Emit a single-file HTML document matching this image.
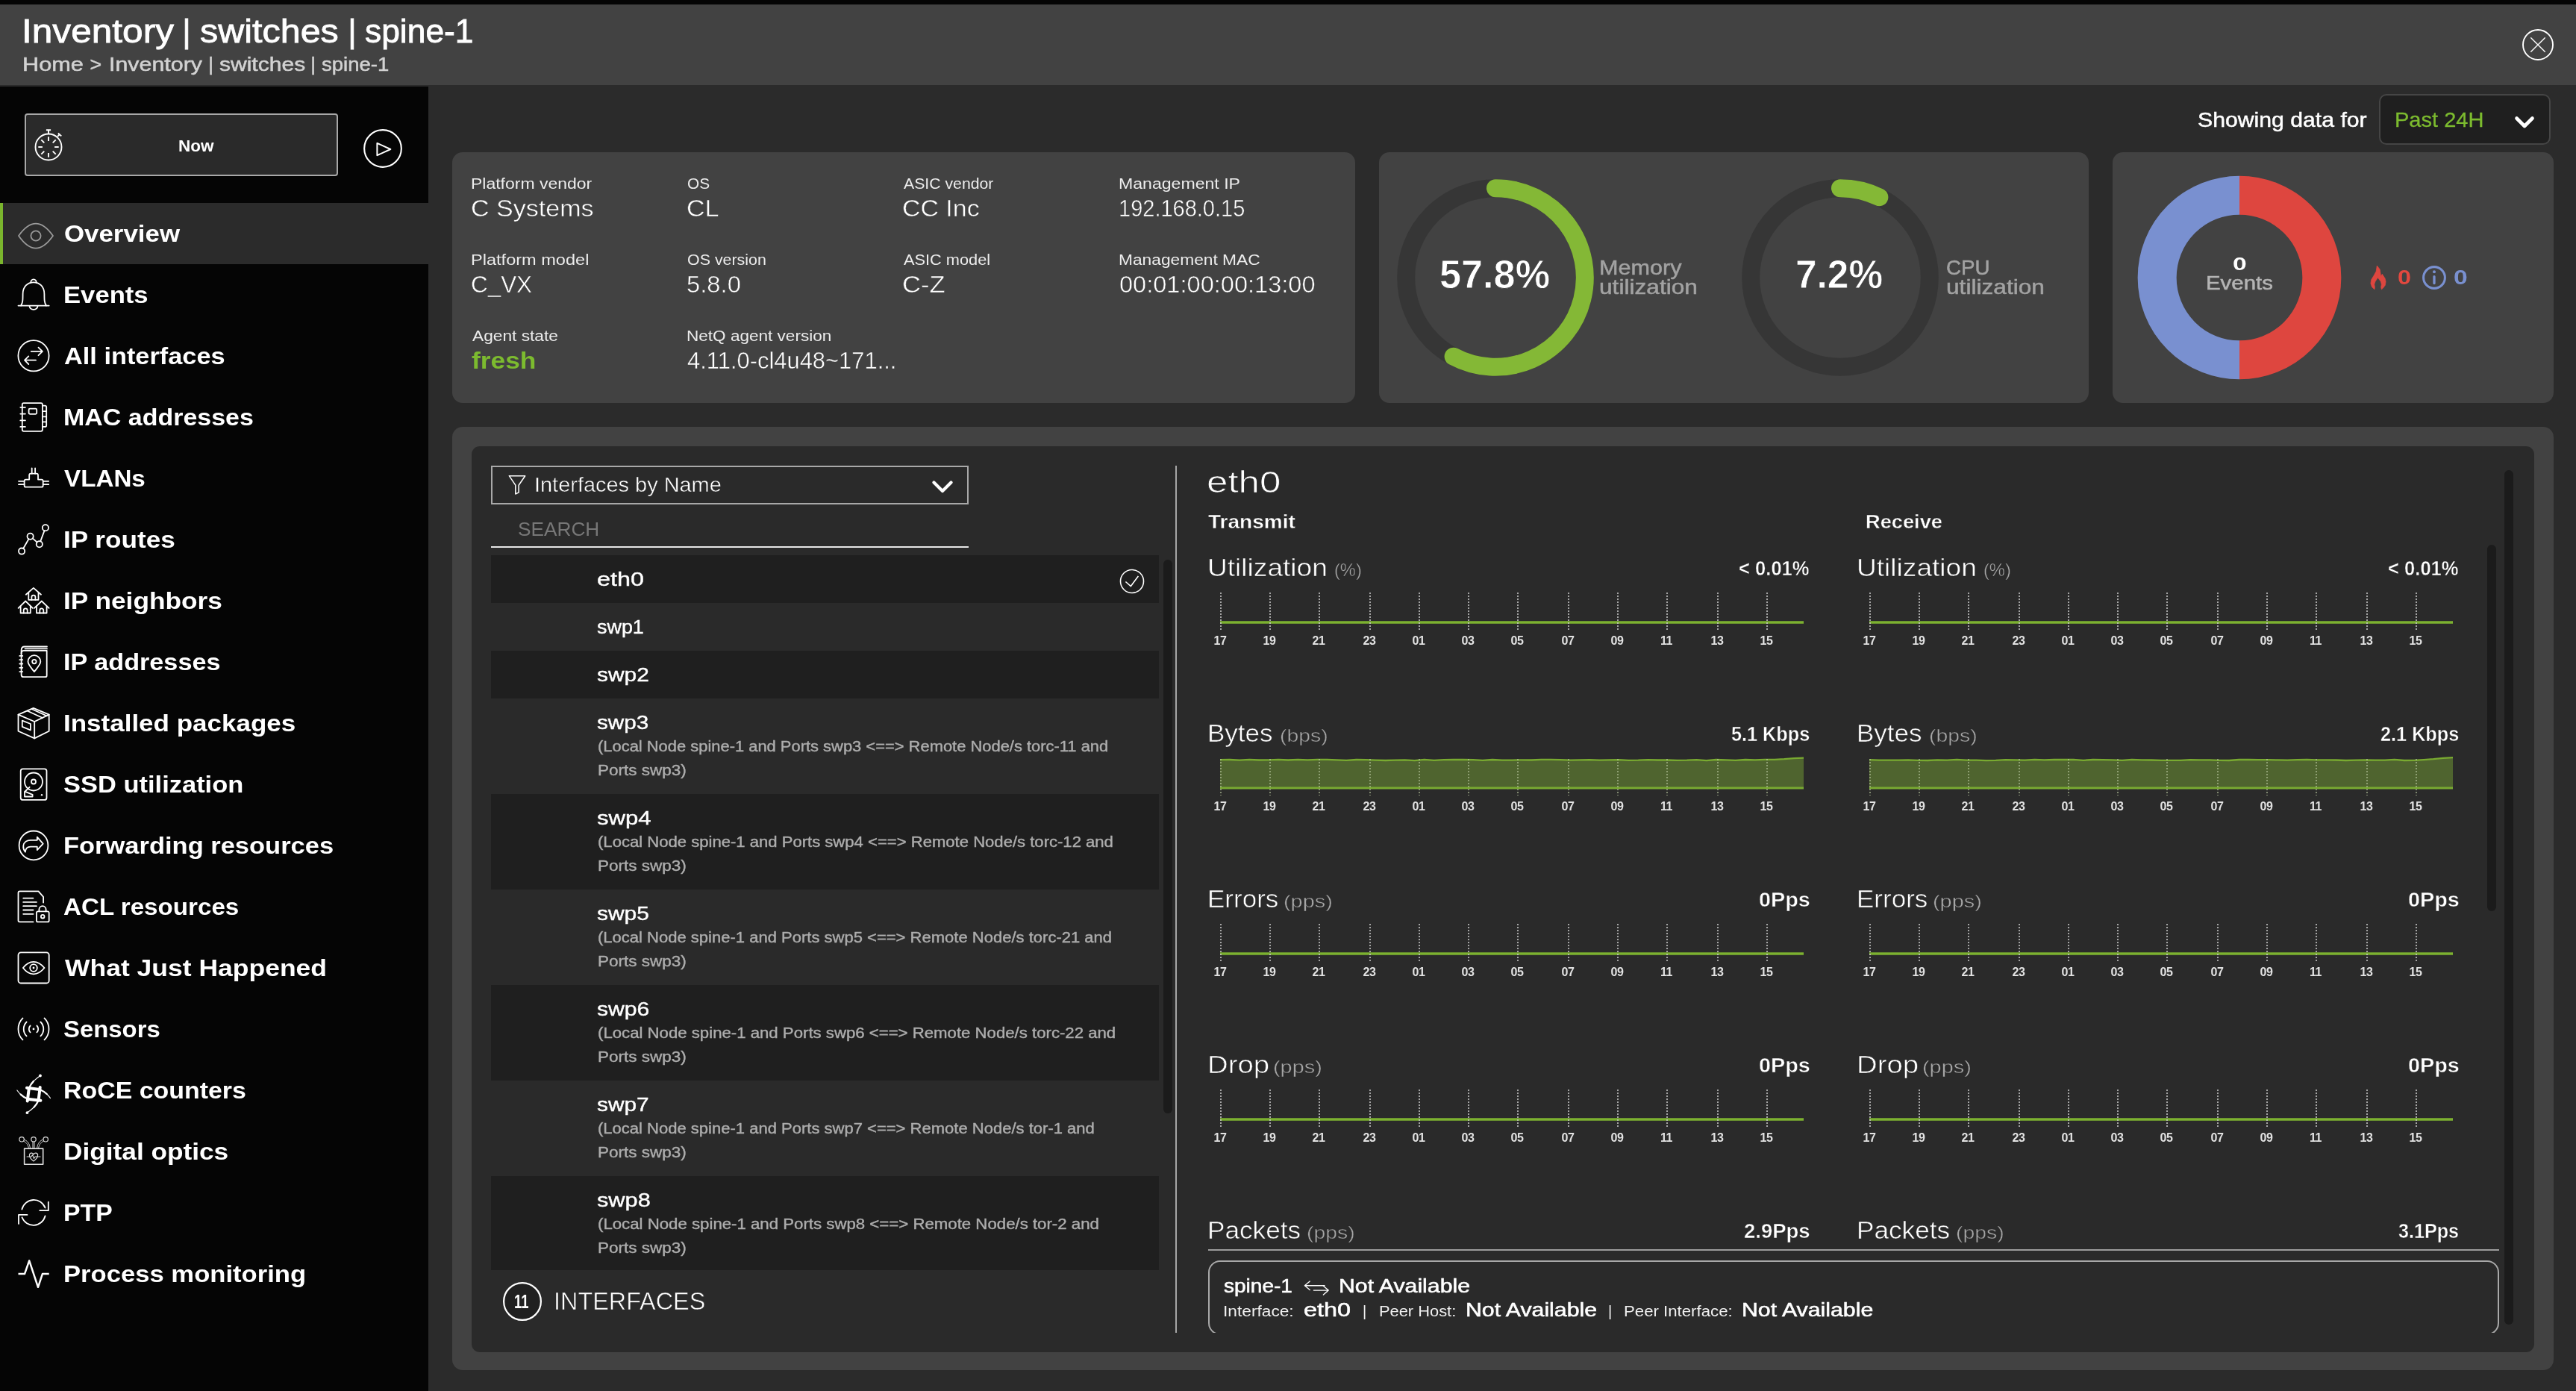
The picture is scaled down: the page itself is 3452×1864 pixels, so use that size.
<!DOCTYPE html>
<html lang="en"><head><meta charset="utf-8"><title>Inventory | switches | spine-1</title>
<style>
html,body{margin:0;padding:0}
body{position:relative;width:3452px;height:1864px;overflow:hidden;background:#2b2b2b;font-family:"Liberation Sans",Arial,sans-serif;color:#fff}
.b{position:absolute;box-sizing:border-box}
.t{position:absolute;white-space:pre;line-height:1;transform-origin:0 0}
.ic,.sv{position:absolute;overflow:visible}
header,nav,main,section,ul,li,h1,h2,h3,p{margin:0;padding:0;list-style:none;font-weight:inherit;font-size:inherit}
</style></head><body>
<header>
<div class="b" style="left:0px;top:0px;width:3452px;height:6px;background:#040404;"></div>
<div class="b" style="left:0px;top:6px;width:3452px;height:108px;background:#424242;"></div>
<h1>
<span class="t" style="left:28.9px;top:20.3px;font-size:44px;transform:scaleX(1.1270);-webkit-text-stroke:0.8px #fff;">Inventory</span>
<span class="t" style="left:232.4px;top:20.3px;font-size:44px;transform:scaleX(1.0030);-webkit-text-stroke:0.8px #fff;"> | </span>
<span class="t" style="left:268.2px;top:20.3px;font-size:44px;transform:scaleX(1.1014);-webkit-text-stroke:0.8px #fff;">switches</span>
<span class="t" style="left:453.7px;top:20.3px;font-size:44px;transform:scaleX(1.0030);-webkit-text-stroke:0.8px #fff;"> | </span>
<span class="t" style="left:489.0px;top:20.3px;font-size:44px;transform:scaleX(1.0084);-webkit-text-stroke:0.8px #fff;">spine-1</span>
</h1>
<p>
<span class="t" style="left:29.5px;top:73.1px;font-size:26px;color:#d2d2d2;transform:scaleX(1.1811);-webkit-text-stroke:0.5px #d2d2d2;">Home</span>
<span class="t" style="left:113.1px;top:73.1px;font-size:26px;color:#d2d2d2;transform:scaleX(1.0309);-webkit-text-stroke:0.5px #d2d2d2;"> &gt; </span>
<span class="t" style="left:145.9px;top:73.1px;font-size:26px;color:#d2d2d2;transform:scaleX(1.1687);-webkit-text-stroke:0.5px #d2d2d2;">Inventory</span>
<span class="t" style="left:272.0px;top:73.1px;font-size:26px;color:#d2d2d2;transform:scaleX(1.0030);-webkit-text-stroke:0.5px #d2d2d2;"> | </span>
<span class="t" style="left:293.6px;top:73.1px;font-size:26px;color:#d2d2d2;transform:scaleX(1.1549);-webkit-text-stroke:0.5px #d2d2d2;">switches</span>
<span class="t" style="left:408.8px;top:73.1px;font-size:26px;color:#d2d2d2;transform:scaleX(1.0030);-webkit-text-stroke:0.5px #d2d2d2;"> | </span>
<span class="t" style="left:430.5px;top:73.1px;font-size:26px;color:#d2d2d2;transform:scaleX(1.0584);-webkit-text-stroke:0.5px #d2d2d2;">spine-1</span>
</p>
<svg class="sv" style="left:3374px;top:33px" width="54" height="54" viewBox="-27 -27 54 54" fill="none" stroke="#fff" stroke-width="1.9" stroke-linecap="round"><circle r="20"/><path d="M-9.3 -9.3L9.3 9.3M9.3 -9.3L-9.3 9.3" stroke-width="1.4"/></svg>
</header>
<nav>
<div class="b" style="left:0px;top:116px;width:574px;height:1748px;background:#050505;"></div>
<div class="b" style="left:33px;top:152px;width:420px;height:84px;background:#2a2a2a;border-radius:4px;border:2px solid #a8a8a8;"></div>
<svg class="sv" style="left:39.3px;top:168.8px" width="52" height="52" viewBox="-26 -28 52 52" fill="none" stroke="#fff" stroke-width="1.9" stroke-linecap="butt"><circle r="17.5"/><path d="M0 -17.5V-23M-3.1 -22.8H3.1M12.1 -14.1L15 -17M12.9 -18.5L17.3 -14.6"/><path d="M0.0 -8.1L0.0 -13.7"/><path d="M5.7 -5.7L9.7 -9.7"/><path d="M8.1 -0.0L13.7 -0.0"/><path d="M5.7 5.7L9.7 9.7"/><path d="M0.0 8.1L0.0 13.7"/><path d="M-5.7 5.7L-9.7 9.7"/><path d="M-8.1 0.0L-13.7 0.0"/><path d="M-5.7 -5.7L-9.7 -9.7"/></svg>
<span class="t" style="left:239.0px;top:185.0px;font-size:22px;font-weight:700;transform:scaleX(1.0244);">Now</span>
<svg class="sv" style="left:483px;top:169px" width="60" height="60" viewBox="-30 -30 60 60" fill="none" stroke="#fff" stroke-width="2.1" stroke-linejoin="round"><circle r="24.85"/><path d="M-7.6 -7.2V9.2L10.3 1Z" stroke-width="2"/></svg>
<div class="b" style="left:0px;top:272px;width:574px;height:82px;background:#2b2b2b;"></div>
<div class="b" style="left:0px;top:272px;width:4px;height:82px;background:#7ab52d;"></div>
<ul>
<li>
<svg class="ic" style="left:17px;top:285px" width="56" height="56" viewBox="0 0 56 56" fill="none" stroke="#9a9a9a" stroke-width="1.8" stroke-linecap="round" stroke-linejoin="round"><path d="M8 31 C15 21 22 14.6 31 14.6 S47 21 54 31 C47 41 40 47.6 31 47.6 S15 41 8 31Z"/><circle cx="31" cy="31" r="6.6"/></svg>
<span class="t" style="left:85.6px;top:297.0px;font-size:32px;font-weight:700;transform:scaleX(1.0891);">Overview</span>
</li>
<li>
<svg class="ic" style="left:17px;top:367px" width="56" height="56" viewBox="0 0 56 56" fill="none" stroke="#fff" stroke-width="1.8" stroke-linecap="round" stroke-linejoin="round"><path d="M7.5 42.6H48.7"/><path d="M11 42.6C13.6 39 13.6 35 13.6 27C13.6 17 20 11.3 28 11.3C36 11.3 42.4 17 42.4 27C42.4 35 42.4 39 45 42.6"/><path d="M24.4 11.9A3.7 3.7 0 1 1 31.6 11.9"/><path d="M22.4 43.2A5.7 5.7 0 0 0 33.6 43.2"/></svg>
<span class="t" style="left:84.7px;top:379.0px;font-size:32px;font-weight:700;transform:scaleX(1.0827);">Events</span>
</li>
<li>
<svg class="ic" style="left:17px;top:449px" width="56" height="56" viewBox="0 0 56 56" fill="none" stroke="#fff" stroke-width="1.8" stroke-linecap="round" stroke-linejoin="round"><circle cx="28" cy="27.7" r="20.6"/><path d="M24.8 21.9H39.6M34.5 16.6L39.9 21.9L34.5 27.2"/><path d="M31 33.7H16.3M21.3 28.4L16 33.7L21.3 39"/></svg>
<span class="t" style="left:85.5px;top:461.0px;font-size:32px;font-weight:700;transform:scaleX(1.0730);">All interfaces</span>
</li>
<li>
<svg class="ic" style="left:17px;top:531px" width="56" height="56" viewBox="0 0 56 56" fill="none" stroke="#fff" stroke-width="1.8" stroke-linecap="round" stroke-linejoin="round"><rect x="12.8" y="9.1" width="27.1" height="37.7" rx="2"/><path d="M39.9 12.6H43.2Q45.2 12.6 45.2 14.6V38.9Q45.2 40.9 43.2 40.9H39.9M39.9 20.2H45.2M39.9 27.3H45.2M39.9 34.4H45.2"/><path d="M10.3 14.8H16.9M10.3 23.6H16.9M10.3 32.4H16.9M10.3 40.9H16.9"/><rect x="21.6" y="16.7" width="10.6" height="7.1" rx="1.5"/></svg>
<span class="t" style="left:84.8px;top:543.0px;font-size:32px;font-weight:700;transform:scaleX(1.0615);">MAC addresses</span>
</li>
<li>
<svg class="ic" style="left:17px;top:613px" width="56" height="56" viewBox="0 0 56 56" fill="none" stroke="#fff" stroke-width="1.8" stroke-linecap="round" stroke-linejoin="round"><path d="M25.7 14.3V21.7M30.1 14.3V21.7"/><path d="M24.2 21.7H32Q34 21.7 34 23.7V29.6H38.7Q40.7 29.6 40.7 31.6V37.7Q40.7 39.7 38.7 39.7H17.6Q15.6 39.7 15.6 37.7V31.6Q15.6 29.6 17.6 29.6H22.2V23.7Q22.2 21.7 24.2 21.7Z"/><path d="M8 31.8H15.6M8 36.2H15.6M40.7 31.8H48.2M40.7 36.2H48.2"/></svg>
<span class="t" style="left:86.0px;top:625.0px;font-size:32px;font-weight:700;transform:scaleX(1.0372);">VLANs</span>
</li>
<li>
<svg class="ic" style="left:17px;top:695px" width="56" height="56" viewBox="0 0 56 56" fill="none" stroke="#fff" stroke-width="1.8" stroke-linecap="round" stroke-linejoin="round"><circle cx="12.1" cy="43.6" r="4.1"/><circle cx="23.6" cy="23.7" r="4.1"/><circle cx="35.8" cy="34.3" r="4.1"/><circle cx="43.9" cy="12.2" r="4.1"/><path d="M14.2 40L21.5 27.3M26.7 26.4L32.7 31.6M37.2 30.4L42.5 16.1"/></svg>
<span class="t" style="left:84.7px;top:707.0px;font-size:32px;font-weight:700;transform:scaleX(1.0988);">IP routes</span>
</li>
<li>
<svg class="ic" style="left:17px;top:777px" width="56" height="56" viewBox="0 0 56 56" fill="none" stroke="#fff" stroke-width="1.8" stroke-linecap="round" stroke-linejoin="round"><path d="M17.799999999999997 19.700000000000003L27.9 10.9L38.0 19.700000000000003"/><path d="M21.299999999999997 17.200000000000003V26.8H34.5V17.200000000000003"/><path d="M25.4 26.8V23.1A2.5 2.5 0 0 1 30.4 23.1V26.8"/><path d="M7.6 37.9L17.2 28.5L26.799999999999997 37.9"/><path d="M10.6 35.4V44.5H23.799999999999997V35.4"/><path d="M14.7 44.5V40.8A2.5 2.5 0 0 1 19.7 40.8V44.5"/><path d="M28.999999999999996 37.9L38.8 28.5L48.599999999999994 37.9"/><path d="M31.999999999999996 35.4V44.5H45.599999999999994V35.4"/><path d="M36.3 44.5V40.8A2.5 2.5 0 0 1 41.3 40.8V44.5"/></svg>
<span class="t" style="left:84.7px;top:789.0px;font-size:32px;font-weight:700;transform:scaleX(1.1014);">IP neighbors</span>
</li>
<li>
<svg class="ic" style="left:17px;top:859px" width="56" height="56" viewBox="0 0 56 56" fill="none" stroke="#fff" stroke-width="1.8" stroke-linecap="round" stroke-linejoin="round"><path d="M11.6 16.5Q11.6 12.8 15 12.8H45.7V46.2Q45.7 48.2 43.7 48.2H14.6Q11.6 48.2 11.6 45.2Z"/><path d="M46 7.5H16Q11.6 7.5 11.6 12.5V17M46 10.4H16.5"/><path d="M9.3 19.9H13.3M9.3 25.2H13.3M9.3 30.5H13.3M9.3 35.8H13.3M9.3 41.1H13.3"/><path d="M28.9 41.1C24 35 20.5 31.5 20.5 27.6A8.4 8.4 0 0 1 37.3 27.6C37.3 31.5 33.8 35 28.9 41.1Z"/><circle cx="28.9" cy="27.6" r="2.7"/></svg>
<span class="t" style="left:84.8px;top:871.0px;font-size:32px;font-weight:700;transform:scaleX(1.0691);">IP addresses</span>
</li>
<li>
<svg class="ic" style="left:17px;top:941px" width="56" height="56" viewBox="0 0 56 56" fill="none" stroke="#fff" stroke-width="1.8" stroke-linecap="round" stroke-linejoin="round"><path d="M27.8 7.8L48.7 16.6V38.7L29.2 48.4L7.5 38.7V16.6Z"/><path d="M7.5 16.6L29.2 26L48.7 16.6M29.2 26V48.4"/><path d="M19.5 11.5L40 21M25.2 9L45.5 18.2"/><path d="M12.8 24.6L23.9 29V37.3L12.8 32.9Z"/></svg>
<span class="t" style="left:84.7px;top:953.0px;font-size:32px;font-weight:700;transform:scaleX(1.0935);">Installed packages</span>
</li>
<li>
<svg class="ic" style="left:17px;top:1023px" width="56" height="56" viewBox="0 0 56 56" fill="none" stroke="#fff" stroke-width="1.8" stroke-linecap="round" stroke-linejoin="round"><rect x="10.7" y="7.3" width="34.8" height="41.6" rx="3"/><circle cx="28" cy="24.5" r="12"/><circle cx="28" cy="24.5" r="3"/><path d="M22.6 31.8L16 38V44.5H26.6V41.8L16.4 37.6"/><circle cx="39" cy="42.3" r="1.2" fill="#fff" stroke="none"/></svg>
<span class="t" style="left:85.4px;top:1035.0px;font-size:32px;font-weight:700;transform:scaleX(1.0772);">SSD utilization</span>
</li>
<li>
<svg class="ic" style="left:17px;top:1105px" width="56" height="56" viewBox="0 0 56 56" fill="none" stroke="#fff" stroke-width="1.8" stroke-linecap="round" stroke-linejoin="round"><circle cx="28" cy="27.9" r="19.4"/><path d="M32.8 16.7L40.7 25.6L32.8 34.1V29.7H24C19.5 29.7 17.2 32 16.9 36.7C14.3 33.5 14 30.5 14.3 28.3C15 23.5 19 20.8 24 20.8H32.8Z"/></svg>
<span class="t" style="left:84.8px;top:1117.0px;font-size:32px;font-weight:700;transform:scaleX(1.0774);">Forwarding resources</span>
</li>
<li>
<svg class="ic" style="left:17px;top:1187px" width="56" height="56" viewBox="0 0 56 56" fill="none" stroke="#fff" stroke-width="1.8" stroke-linecap="round" stroke-linejoin="round"><path d="M27.5 48.4H9.5Q7.5 48.4 7.5 46.4V9.4Q7.5 7.4 9.5 7.4H34.5L41.1 14.8V22.5"/><path d="M14.2 16.6H27.5M14.2 21.9H31.9M14.2 27.2H31.9M14.2 32.5H27.5M14.2 37.8H27.5"/><rect x="31.9" y="34.3" width="16.8" height="14.1" rx="2"/><path d="M35.4 34.3V31.8A4.6 4.6 0 0 1 44.6 31.8V34.3"/><circle cx="40.2" cy="41.2" r="2.3"/></svg>
<span class="t" style="left:85.4px;top:1199.0px;font-size:32px;font-weight:700;transform:scaleX(1.0362);">ACL resources</span>
</li>
<li>
<svg class="ic" style="left:17px;top:1269px" width="56" height="56" viewBox="0 0 56 56" fill="none" stroke="#fff" stroke-width="1.8" stroke-linecap="round" stroke-linejoin="round"><rect x="7.5" y="7.3" width="41.2" height="41.2" rx="3.5"/><path d="M13.9 28C18 22.5 22.5 19.8 28 19.8S38 22.5 42.5 28C38 33.5 33.5 36.3 28 36.3S18 33.5 13.9 28Z"/><circle cx="28" cy="28" r="4.8"/><circle cx="28" cy="28" r="1.4" fill="#fff" stroke="none"/></svg>
<span class="t" style="left:86.6px;top:1281.0px;font-size:32px;font-weight:700;transform:scaleX(1.1091);">What Just Happened</span>
</li>
<li>
<svg class="ic" style="left:17px;top:1351px" width="56" height="56" viewBox="0 0 56 56" fill="none" stroke="#fff" stroke-width="1.8" stroke-linecap="round" stroke-linejoin="round"><path d="M32.4 23.5A6.2 6.2 0 0 1 32.4 32.3M23.6 23.5A6.2 6.2 0 0 0 23.6 32.3"/><path d="M37.4 18.5A13.3 13.3 0 0 1 37.4 37.3M18.6 18.5A13.3 13.3 0 0 0 18.6 37.3"/><path d="M42.5 13.4A20.5 20.5 0 0 1 42.5 42.4M13.5 13.4A20.5 20.5 0 0 0 13.5 42.4"/><circle cx="28" cy="27.9" r="1.4" fill="#fff" stroke="none"/></svg>
<span class="t" style="left:85.4px;top:1363.0px;font-size:32px;font-weight:700;transform:scaleX(1.0274);">Sensors</span>
</li>
<li>
<svg class="ic" style="left:17px;top:1433px" width="56" height="56" viewBox="0 0 56 56" fill="none" stroke="#fff" stroke-width="1.8" stroke-linecap="round" stroke-linejoin="round"><g transform="translate(28.2 33.3) rotate(7)" fill="none" stroke="#fff" stroke-linecap="round"><g transform="rotate(0)"><path d="M-7.3 -7.3L-7.3 10.2" stroke-width="4"/><path d="M-7.3 -7.3Q-5.7 -12.9 -2.4 -17.3" stroke-width="2.3"/><path d="M-2.4 -17.3Q1.4 -22 5.7 -25.7" stroke-width="1.2"/><circle cx="5.7" cy="-25.7" r="1.9" fill="#fff" stroke="none"/></g><g transform="rotate(90)"><path d="M-7.3 -7.3L-7.3 10.2" stroke-width="4"/><path d="M-7.3 -7.3Q-5.7 -12.9 -2.4 -17.3" stroke-width="2.3"/><path d="M-2.4 -17.3Q0 -20.6 2.6 -22.8" stroke-width="1.1"/></g><g transform="rotate(180)"><path d="M-7.3 -7.3L-7.3 10.2" stroke-width="4"/><path d="M-7.3 -7.3Q-5.7 -12.9 -2.4 -17.3" stroke-width="2.3"/><path d="M-2.4 -17.3Q1.4 -22 5.7 -25.7" stroke-width="1.2"/><circle cx="5.7" cy="-25.7" r="1.9" fill="#fff" stroke="none"/></g><g transform="rotate(270)"><path d="M-7.3 -7.3L-7.3 10.2" stroke-width="4"/><path d="M-7.3 -7.3Q-5.7 -12.9 -2.4 -17.3" stroke-width="2.3"/><path d="M-2.4 -17.3Q0 -20.6 2.6 -22.8" stroke-width="1.1"/></g></g></svg>
<span class="t" style="left:84.8px;top:1445.0px;font-size:32px;font-weight:700;transform:scaleX(1.0594);">RoCE counters</span>
</li>
<li>
<svg class="ic" style="left:17px;top:1515px" width="56" height="56" viewBox="0 0 56 56" fill="none" stroke="#ddd" stroke-width="1.8" stroke-linecap="round" stroke-linejoin="round"><rect x="15.6" y="24.1" width="25.1" height="21.2" stroke-width="1.6"/><path d="M27 24V15M29 24V15" stroke-width="1"/><path d="M21.4 24C21 18 17 15.5 14.5 14M23.4 24C23 17 19 13.5 15.5 12" stroke-width="1"/><path d="M34.6 24C35 18 39 15.5 41.5 14M32.6 24C33 17 37 13.5 40.5 12" stroke-width="1"/><circle cx="28" cy="11.8" r="3.2" stroke-width="1.2"/><circle cx="12.1" cy="11.8" r="3.2" stroke-width="1.2"/><circle cx="44.2" cy="11.8" r="3.2" stroke-width="1.2"/><path d="M28 41C24 38 22.5 36 22.5 33.5A2.8 2.8 0 0 1 28 32.3A2.8 2.8 0 0 1 33.5 33.5C33.5 36 32 38 28 41Z" stroke-width="1.2"/><path d="M19 35H25L26.5 32.5L28.5 37.5L30 35H37" stroke-width="1.1"/></svg>
<span class="t" style="left:84.7px;top:1527.0px;font-size:32px;font-weight:700;transform:scaleX(1.1011);">Digital optics</span>
</li>
<li>
<svg class="ic" style="left:17px;top:1597px" width="56" height="56" viewBox="0 0 56 56" fill="none" stroke="#fff" stroke-width="1.8" stroke-linecap="round" stroke-linejoin="round"><path d="M12.4 23.5A16.3 16.3 0 0 1 43.5 21.5"/><path d="M47.8 13.7V25.2H36.3"/><path d="M43.6 32.3A16.3 16.3 0 0 1 12.5 34.3"/><path d="M8 42.9V30.9H19.5"/></svg>
<span class="t" style="left:84.8px;top:1609.0px;font-size:32px;font-weight:700;transform:scaleX(1.0557);">PTP</span>
</li>
<li>
<svg class="ic" style="left:17px;top:1679px" width="56" height="56" viewBox="0 0 56 56" fill="none" stroke="#fff" stroke-width="1.8" stroke-linecap="round" stroke-linejoin="round"><path d="M7.5 28.1H16L22.2 10.4L34 45.8L39.9 28.1H48.7" stroke-width="2.5" stroke-linejoin="round" stroke-linecap="butt"/></svg>
<span class="t" style="left:84.7px;top:1691.0px;font-size:32px;font-weight:700;transform:scaleX(1.0819);">Process monitoring</span>
</li>
</ul></nav>
<main>
<span class="t" style="left:2944.9px;top:146.6px;font-size:28px;transform:scaleX(1.0786);-webkit-text-stroke:0.5px #fff;">Showing data for</span>
<div class="b" style="left:3188px;top:126px;width:230px;height:68px;background:#1f1f1f;border-radius:10px;border:2px solid #454545;"></div>
<span class="t" style="left:3209.0px;top:146.6px;font-size:28px;color:#7cbb2f;transform:scaleX(1.0371);-webkit-text-stroke:0.3px #7cbb2f;">Past 24H</span>
<svg class="sv" style="left:3360px;top:145px" width="46" height="36" viewBox="3360 145 46 36" fill="none" stroke="#fff" stroke-width="4.6" stroke-linecap="round" stroke-linejoin="round"><path d="M3372.5 158.5L3383 169L3393.5 158.5"/></svg>
<section>
<div class="b" style="left:606px;top:204px;width:1210px;height:336px;background:#424242;border-radius:14px;"></div>
<span class="t" style="left:630.8px;top:235.5px;font-size:20px;color:#ececec;transform:scaleX(1.1494);">Platform vendor</span>
<span class="t" style="left:630.9px;top:263.0px;font-size:32px;transform:scaleX(1.0638);-webkit-text-stroke:0.5px #424242;">C Systems</span>
<span class="t" style="left:630.7px;top:337.7px;font-size:20px;color:#ececec;transform:scaleX(1.1778);">Platform model</span>
<span class="t" style="left:631.0px;top:365.0px;font-size:32px;transform:scaleX(0.9818);-webkit-text-stroke:0.5px #424242;">C_VX</span>
<span class="t" style="left:632.6px;top:439.5px;font-size:20px;color:#ececec;transform:scaleX(1.1356);">Agent state</span>
<span class="t" style="left:632.1px;top:467.0px;font-size:32px;font-weight:700;color:#7cbb2f;transform:scaleX(1.1050);">fresh</span>
<span class="t" style="left:920.8px;top:235.5px;font-size:20px;color:#ececec;transform:scaleX(1.0406);">OS</span>
<span class="t" style="left:920.0px;top:263.0px;font-size:32px;transform:scaleX(1.0643);-webkit-text-stroke:0.5px #424242;">CL</span>
<span class="t" style="left:920.7px;top:337.7px;font-size:20px;color:#ececec;transform:scaleX(1.0703);">OS version</span>
<span class="t" style="left:920.4px;top:365.0px;font-size:32px;transform:scaleX(1.0247);-webkit-text-stroke:0.5px #424242;">5.8.0</span>
<span class="t" style="left:919.9px;top:439.5px;font-size:20px;color:#ececec;transform:scaleX(1.1275);">NetQ agent version</span>
<span class="t" style="left:921.1px;top:467.0px;font-size:32px;transform:scaleX(0.9661);-webkit-text-stroke:0.5px #424242;">4.11.0-cl4u48~171...</span>
<span class="t" style="left:1211.0px;top:235.5px;font-size:20px;color:#ececec;transform:scaleX(1.0619);">ASIC vendor</span>
<span class="t" style="left:1209.3px;top:263.0px;font-size:32px;transform:scaleX(1.0591);-webkit-text-stroke:0.5px #424242;">CC Inc</span>
<span class="t" style="left:1211.0px;top:337.7px;font-size:20px;color:#ececec;transform:scaleX(1.0882);">ASIC model</span>
<span class="t" style="left:1209.3px;top:365.0px;font-size:32px;transform:scaleX(1.0804);-webkit-text-stroke:0.5px #424242;">C-Z</span>
<span class="t" style="left:1499.2px;top:235.5px;font-size:20px;color:#ececec;transform:scaleX(1.1544);">Management IP</span>
<span class="t" style="left:1498.8px;top:263.0px;font-size:32px;transform:scaleX(0.9061);-webkit-text-stroke:0.5px #424242;">192.168.0.15</span>
<span class="t" style="left:1499.2px;top:337.7px;font-size:20px;color:#ececec;transform:scaleX(1.1375);">Management MAC</span>
<span class="t" style="left:1499.7px;top:365.0px;font-size:32px;transform:scaleX(1.0175);-webkit-text-stroke:0.5px #424242;">00:01:00:00:13:00</span>
</section>
<section>
<div class="b" style="left:1848px;top:204px;width:951px;height:336px;background:#424242;border-radius:14px;"></div>
<svg class="sv" style="left:1863.7px;top:231.8px" width="280" height="280" viewBox="1863.7 231.8 280 280" fill="none" stroke-width="24"><circle cx="2003.7" cy="371.8" r="119.8" stroke="#363636"/><path d="M2003.7 252.0A119.8 119.8 0 1 1 1947.31 477.50" stroke="#84b836" stroke-linecap="round"/></svg>
<svg class="sv" style="left:2325.7px;top:231.8px" width="280" height="280" viewBox="2325.7 231.8 280 280" fill="none" stroke-width="24"><circle cx="2465.7" cy="371.8" r="119.8" stroke="#363636"/><path d="M2465.7 252.0A119.8 119.8 0 0 1 2518.07 264.05" stroke="#84b836" stroke-linecap="round"/></svg>
<span class="t" style="left:1929.3px;top:340.0px;font-size:54px;font-weight:700;transform:scaleX(0.9672);-webkit-text-stroke:0.8px #424242;">57.8%</span>
<span class="t" style="left:2406.3px;top:340.0px;font-size:54px;font-weight:700;transform:scaleX(0.9514);-webkit-text-stroke:0.8px #424242;">7.2%</span>
<span class="t" style="left:2143.4px;top:345.0px;font-size:28px;color:#a2a2a2;transform:scaleX(1.0927);-webkit-text-stroke:0.5px #a2a2a2;">Memory</span>
<span class="t" style="left:2143.1px;top:370.6px;font-size:28px;color:#a2a2a2;transform:scaleX(1.1298);-webkit-text-stroke:0.5px #a2a2a2;">utilization</span>
<span class="t" style="left:2607.9px;top:345.0px;font-size:28px;color:#a2a2a2;transform:scaleX(0.9914);-webkit-text-stroke:0.5px #a2a2a2;">CPU</span>
<span class="t" style="left:2608.1px;top:370.6px;font-size:28px;color:#a2a2a2;transform:scaleX(1.1298);-webkit-text-stroke:0.5px #a2a2a2;">utilization</span>
</section>
<section>
<div class="b" style="left:2831px;top:204px;width:591px;height:336px;background:#424242;border-radius:14px;"></div>
<svg class="sv" style="left:2860.8px;top:231.89999999999998px" width="280" height="280" viewBox="2860.8 231.89999999999998 280 280" fill="none" stroke-width="52"><path d="M3000.8 261.54999999999995A110.35 110.35 0 0 1 3000.8 482.25" stroke="#de463f"/><path d="M3000.8 482.25A110.35 110.35 0 0 1 3000.8 261.54999999999995" stroke="#7990d0"/></svg>
<span class="t" style="left:2991.7px;top:341.5px;font-size:24px;font-weight:700;transform:scaleX(1.4035);">0</span>
<span class="t" style="left:2955.7px;top:366.6px;font-size:25px;color:#b4b4b4;transform:scaleX(1.1769);-webkit-text-stroke:0.5px #b4b4b4;">Events</span>
<svg class="sv" style="left:3174px;top:354px" width="26" height="36" viewBox="3174 354 26 36"><path fill="#de463f" stroke="#de463f" stroke-width=".7" stroke-linejoin="round" d="M3185.3 356.0L3189.2 361.1L3190.1 366.7L3190.4 370.4L3192.3 367.3L3196.0 372.9L3197.1 377.3L3196.3 382.2L3193.5 386.0L3191.4 387.8L3190.7 384.7L3191.4 381.0L3190.4 377.3L3186.4 372.0L3183.0 377.3L3181.7 381.0L3182.4 384.7L3182.0 387.8L3178.6 384.7L3176.9 379.8L3177.7 374.8L3181.1 369.2L3184.2 363.6Z"/></svg>
<span class="t" style="left:3212.6px;top:359.0px;font-size:27px;font-weight:700;color:#e2483f;transform:scaleX(1.2008);">0</span>
<svg class="sv" style="left:3244px;top:354px" width="36" height="36" viewBox="-18 -18 36 36" fill="none" stroke="#7990d0" stroke-width="3.1" stroke-linecap="round"><circle r="14.4"/><path d="M0 -1.3V7.5" stroke-width="3.3"/><circle cy="-7.8" r="2" fill="#7990d0" stroke="none"/></svg>
<span class="t" style="left:3287.7px;top:359.0px;font-size:27px;font-weight:700;color:#7990d0;transform:scaleX(1.2476);">0</span>
</section>
<section>
<div class="b" style="left:606px;top:572px;width:2816px;height:1264px;background:#424242;border-radius:14px;"></div>
<div class="b" style="left:632px;top:598px;width:2764px;height:1214px;background:#2a2a2a;border-radius:11px;"></div>
<div class="b" style="left:658px;top:624px;width:640px;height:52px;background:transparent;border:2px solid #a8a8a8;"></div>
<svg class="sv" style="left:676px;top:632px" width="34" height="36" viewBox="676 632 34 36" fill="none" stroke="#fff" stroke-width="1.5" stroke-linejoin="round"><path d="M682.3 637.7H703.7L695.1 650.2V659.9L690.8 662V650.2Z"/></svg>
<span class="t" style="left:715.7px;top:636.4px;font-size:28px;transform:scaleX(1.0331);-webkit-text-stroke:0.45px #2a2a2a;">Interfaces by Name</span>
<svg class="sv" style="left:1240px;top:636px" width="46" height="32" viewBox="1240 636 46 32" fill="none" stroke="#fff" stroke-width="4.2" stroke-linecap="round" stroke-linejoin="round"><path d="M1251.5 646.5L1263 658L1274.5 646.5"/></svg>
<span class="t" style="left:693.8px;top:695.8px;font-size:26px;color:#777;transform:scaleX(1.0082);">SEARCH</span>
<div class="b" style="left:658px;top:732px;width:640px;height:2px;background:#e6e6e6;"></div>
<ul>
<li>
<div class="b" style="left:658px;top:744px;width:895px;height:64px;background:#1f1f1f;"></div>
<span class="t" style="left:799.7px;top:763.0px;font-size:26px;transform:scaleX(1.2423);-webkit-text-stroke:0.4px #fff;">eth0</span>
</li>
<li>
<span class="t" style="left:800.2px;top:827.0px;font-size:26px;transform:scaleX(1.0347);-webkit-text-stroke:0.4px #fff;">swp1</span>
</li>
<li>
<div class="b" style="left:658px;top:872px;width:895px;height:64px;background:#1f1f1f;"></div>
<span class="t" style="left:800.1px;top:891.0px;font-size:26px;transform:scaleX(1.1496);-webkit-text-stroke:0.4px #fff;">swp2</span>
</li>
<li>
<span class="t" style="left:800.1px;top:955.0px;font-size:26px;transform:scaleX(1.1394);-webkit-text-stroke:0.4px #fff;">swp3</span>
<span class="t" style="left:800.8px;top:989.8px;font-size:20px;color:#adadad;transform:scaleX(1.0957);-webkit-text-stroke:0.4px #adadad;">(Local Node spine-1 and Ports swp3 &lt;==&gt; Remote Node/s torc-11 and</span>
<span class="t" style="left:800.6px;top:1021.7px;font-size:20px;color:#adadad;transform:scaleX(1.1237);-webkit-text-stroke:0.4px #adadad;">Ports swp3)</span>
</li>
<li>
<div class="b" style="left:658px;top:1064px;width:895px;height:128px;background:#1f1f1f;"></div>
<span class="t" style="left:800.1px;top:1083.0px;font-size:26px;transform:scaleX(1.1970);-webkit-text-stroke:0.4px #fff;">swp4</span>
<span class="t" style="left:800.8px;top:1117.8px;font-size:20px;color:#adadad;transform:scaleX(1.1038);-webkit-text-stroke:0.4px #adadad;">(Local Node spine-1 and Ports swp4 &lt;==&gt; Remote Node/s torc-12 and</span>
<span class="t" style="left:800.6px;top:1149.7px;font-size:20px;color:#adadad;transform:scaleX(1.1237);-webkit-text-stroke:0.4px #adadad;">Ports swp3)</span>
</li>
<li>
<span class="t" style="left:800.1px;top:1211.0px;font-size:26px;transform:scaleX(1.1513);-webkit-text-stroke:0.4px #fff;">swp5</span>
<span class="t" style="left:800.8px;top:1245.8px;font-size:20px;color:#adadad;transform:scaleX(1.1009);-webkit-text-stroke:0.4px #adadad;">(Local Node spine-1 and Ports swp5 &lt;==&gt; Remote Node/s torc-21 and</span>
<span class="t" style="left:800.6px;top:1277.7px;font-size:20px;color:#adadad;transform:scaleX(1.1237);-webkit-text-stroke:0.4px #adadad;">Ports swp3)</span>
</li>
<li>
<div class="b" style="left:658px;top:1320px;width:895px;height:128px;background:#1f1f1f;"></div>
<span class="t" style="left:800.1px;top:1339.0px;font-size:26px;transform:scaleX(1.1581);-webkit-text-stroke:0.4px #fff;">swp6</span>
<span class="t" style="left:800.8px;top:1373.8px;font-size:20px;color:#adadad;transform:scaleX(1.1091);-webkit-text-stroke:0.4px #adadad;">(Local Node spine-1 and Ports swp6 &lt;==&gt; Remote Node/s torc-22 and</span>
<span class="t" style="left:800.6px;top:1405.7px;font-size:20px;color:#adadad;transform:scaleX(1.1237);-webkit-text-stroke:0.4px #adadad;">Ports swp3)</span>
</li>
<li>
<span class="t" style="left:800.1px;top:1467.0px;font-size:26px;transform:scaleX(1.1462);-webkit-text-stroke:0.4px #fff;">swp7</span>
<span class="t" style="left:800.8px;top:1501.8px;font-size:20px;color:#adadad;transform:scaleX(1.1009);-webkit-text-stroke:0.4px #adadad;">(Local Node spine-1 and Ports swp7 &lt;==&gt; Remote Node/s tor-1 and</span>
<span class="t" style="left:800.6px;top:1533.7px;font-size:20px;color:#adadad;transform:scaleX(1.1237);-webkit-text-stroke:0.4px #adadad;">Ports swp3)</span>
</li>
<li>
<div class="b" style="left:658px;top:1576px;width:895px;height:126px;background:#1f1f1f;"></div>
<span class="t" style="left:800.1px;top:1595.0px;font-size:26px;transform:scaleX(1.1819);-webkit-text-stroke:0.4px #fff;">swp8</span>
<span class="t" style="left:800.8px;top:1629.8px;font-size:20px;color:#adadad;transform:scaleX(1.1109);-webkit-text-stroke:0.4px #adadad;">(Local Node spine-1 and Ports swp8 &lt;==&gt; Remote Node/s tor-2 and</span>
<span class="t" style="left:800.6px;top:1661.7px;font-size:20px;color:#adadad;transform:scaleX(1.1237);-webkit-text-stroke:0.4px #adadad;">Ports swp3)</span>
</li>
</ul>
<svg class="sv" style="left:1498px;top:760px" width="38" height="38" viewBox="-19 -19 38 38" fill="none" stroke="#fff" stroke-width="1.6" stroke-linecap="round" stroke-linejoin="round"><circle r="15.5"/><path d="M-8.6 0.5L-1.65 6.5L8.4 -7.1" stroke-linecap="butt" stroke-linejoin="miter"/></svg>
<div class="b" style="left:1559px;top:750px;width:12px;height:742px;background:#1b1b1b;border-radius:6px;"></div>
<div class="b" style="left:1575px;top:624px;width:2px;height:1162px;background:#a6a6a6;"></div>
<svg class="sv" style="left:671.9px;top:1715.9px" width="56" height="56" viewBox="-28 -28 56 56"><circle r="24.9" fill="#202020" stroke="#fff" stroke-width="2.2"/></svg>
<span class="t" style="left:688.9px;top:1730.8px;font-size:26px;font-weight:700;transform:scaleX(0.7098);">11</span>
<span class="t" style="left:741.9px;top:1727.1px;font-size:33px;transform:scaleX(0.9811);-webkit-text-stroke:0.6px #2a2a2a;">INTERFACES</span>
<span class="t" style="left:1617.0px;top:626.0px;font-size:40px;transform:scaleX(1.2767);-webkit-text-stroke:0.7px #2a2a2a;">eth0</span>
<span class="t" style="left:1618.7px;top:685.7px;font-size:26px;font-weight:700;transform:scaleX(1.0773);-webkit-text-stroke:0.4px #2a2a2a;">Transmit</span>
<span class="t" style="left:2499.6px;top:685.7px;font-size:26px;font-weight:700;transform:scaleX(1.0472);-webkit-text-stroke:0.4px #2a2a2a;">Receive</span>
<span class="t" style="left:1618.2px;top:743.7px;font-size:33px;transform:scaleX(1.1247);-webkit-text-stroke:0.55px #2a2a2a;">Utilization</span>
<span class="t" style="left:1787.6px;top:752.0px;font-size:24px;color:#a6a6a6;transform:scaleX(0.9848);-webkit-text-stroke:0.4px #2a2a2a;">(%)</span>
<span class="t" style="left:2330.3px;top:748.5px;font-size:27px;font-weight:700;transform:scaleX(0.9476);-webkit-text-stroke:0.45px #2a2a2a;">&lt; 0.01%</span>
<svg class="sv" style="left:1616px;top:788px" width="820" height="90" viewBox="1616 788 820 90"><path d="M1635 834H2417" stroke="#7cb130" stroke-width="3.5"/><path d="M1636 794V844M1702 794V844M1768 794V844M1836 794V844M1902 794V844M1968 794V844M2034 794V844M2102 794V844M2168 794V844M2234 794V844M2302 794V844M2368 794V844" stroke="#c4c4c4" stroke-width="2" stroke-dasharray="2 2" opacity=".8"/><g font-family="Liberation Sans,Arial,sans-serif" font-size="16" font-weight="700" fill="#e2e2e2" text-anchor="middle" style="filter:blur(.5px)" letter-spacing="-.4"><text x="1635" y="864">17</text><text x="1701" y="864">19</text><text x="1767" y="864">21</text><text x="1835" y="864">23</text><text x="1901" y="864">01</text><text x="1967" y="864">03</text><text x="2033" y="864">05</text><text x="2101" y="864">07</text><text x="2167" y="864">09</text><text x="2233" y="864">11</text><text x="2301" y="864">13</text><text x="2367" y="864">15</text></g></svg>
<span class="t" style="left:1618.2px;top:965.7px;font-size:33px;transform:scaleX(1.0597);-webkit-text-stroke:0.55px #2a2a2a;">Bytes</span>
<span class="t" style="left:1714.7px;top:974.0px;font-size:24px;color:#a6a6a6;transform:scaleX(1.1814);-webkit-text-stroke:0.4px #2a2a2a;">(bps)</span>
<span class="t" style="left:2320.1px;top:970.5px;font-size:27px;font-weight:700;transform:scaleX(0.9352);-webkit-text-stroke:0.45px #2a2a2a;">5.1 Kbps</span>
<svg class="sv" style="left:1616px;top:1010px" width="820" height="90" viewBox="1616 1010 820 90"><polygon points="1635,1056 1635.0,1018.2 1648.0,1018.0 1661.1,1018.6 1674.1,1017.9 1687.1,1018.5 1700.2,1018.3 1713.2,1017.9 1726.2,1018.5 1739.3,1017.8 1752.3,1018.4 1765.3,1017.9 1778.4,1017.9 1791.4,1018.4 1804.4,1018.9 1817.5,1018.0 1830.5,1018.1 1843.5,1018.6 1856.6,1019.0 1869.6,1018.6 1882.6,1018.3 1895.7,1019.1 1908.7,1017.9 1921.7,1018.9 1934.8,1018.2 1947.8,1018.0 1960.8,1018.0 1973.9,1018.2 1986.9,1018.9 1999.9,1018.0 2013.0,1018.6 2026.0,1018.6 2039.0,1018.3 2052.1,1018.5 2065.1,1017.9 2078.1,1017.9 2091.2,1018.1 2104.2,1018.7 2117.2,1018.4 2130.3,1018.2 2143.3,1018.6 2156.3,1018.4 2169.4,1018.2 2182.4,1018.8 2195.4,1018.7 2208.5,1018.1 2221.5,1018.5 2234.5,1018.5 2247.6,1018.9 2260.6,1018.7 2273.6,1018.2 2286.7,1019.1 2299.7,1018.0 2312.7,1018.3 2325.8,1018.8 2338.8,1018.0 2351.8,1018.4 2364.9,1017.9 2377.9,1017.9 2390.9,1017.2 2404.0,1016.1 2417.0,1015.7 2417,1056" fill="#4f642f"/><polyline points="1635.0,1018.2 1648.0,1018.0 1661.1,1018.6 1674.1,1017.9 1687.1,1018.5 1700.2,1018.3 1713.2,1017.9 1726.2,1018.5 1739.3,1017.8 1752.3,1018.4 1765.3,1017.9 1778.4,1017.9 1791.4,1018.4 1804.4,1018.9 1817.5,1018.0 1830.5,1018.1 1843.5,1018.6 1856.6,1019.0 1869.6,1018.6 1882.6,1018.3 1895.7,1019.1 1908.7,1017.9 1921.7,1018.9 1934.8,1018.2 1947.8,1018.0 1960.8,1018.0 1973.9,1018.2 1986.9,1018.9 1999.9,1018.0 2013.0,1018.6 2026.0,1018.6 2039.0,1018.3 2052.1,1018.5 2065.1,1017.9 2078.1,1017.9 2091.2,1018.1 2104.2,1018.7 2117.2,1018.4 2130.3,1018.2 2143.3,1018.6 2156.3,1018.4 2169.4,1018.2 2182.4,1018.8 2195.4,1018.7 2208.5,1018.1 2221.5,1018.5 2234.5,1018.5 2247.6,1018.9 2260.6,1018.7 2273.6,1018.2 2286.7,1019.1 2299.7,1018.0 2312.7,1018.3 2325.8,1018.8 2338.8,1018.0 2351.8,1018.4 2364.9,1017.9 2377.9,1017.9 2390.9,1017.2 2404.0,1016.1 2417.0,1015.7" fill="none" stroke="#79aa31" stroke-width="2.3"/><path d="M1635 1056H2417" stroke="#79aa31" stroke-width="2.8"/><path d="M1636 1017V1066M1702 1017V1066M1768 1017V1066M1836 1017V1066M1902 1017V1066M1968 1017V1066M2034 1017V1066M2102 1017V1066M2168 1017V1066M2234 1017V1066M2302 1017V1066M2368 1017V1066" stroke="#b9c79f" stroke-width="2" stroke-dasharray="2 2" opacity=".6"/><g font-family="Liberation Sans,Arial,sans-serif" font-size="16" font-weight="700" fill="#e2e2e2" text-anchor="middle" style="filter:blur(.5px)" letter-spacing="-.4"><text x="1635" y="1086">17</text><text x="1701" y="1086">19</text><text x="1767" y="1086">21</text><text x="1835" y="1086">23</text><text x="1901" y="1086">01</text><text x="1967" y="1086">03</text><text x="2033" y="1086">05</text><text x="2101" y="1086">07</text><text x="2167" y="1086">09</text><text x="2233" y="1086">11</text><text x="2301" y="1086">13</text><text x="2367" y="1086">15</text></g></svg>
<span class="t" style="left:1618.2px;top:1187.7px;font-size:33px;transform:scaleX(1.0609);-webkit-text-stroke:0.55px #2a2a2a;">Errors</span>
<span class="t" style="left:1719.8px;top:1196.0px;font-size:24px;color:#a6a6a6;transform:scaleX(1.2026);-webkit-text-stroke:0.4px #2a2a2a;">(pps)</span>
<span class="t" style="left:2356.6px;top:1192.5px;font-size:27px;font-weight:700;transform:scaleX(1.0662);-webkit-text-stroke:0.45px #2a2a2a;">0Pps</span>
<svg class="sv" style="left:1616px;top:1232px" width="820" height="90" viewBox="1616 1232 820 90"><path d="M1635 1278H2417" stroke="#7cb130" stroke-width="3.5"/><path d="M1636 1238V1288M1702 1238V1288M1768 1238V1288M1836 1238V1288M1902 1238V1288M1968 1238V1288M2034 1238V1288M2102 1238V1288M2168 1238V1288M2234 1238V1288M2302 1238V1288M2368 1238V1288" stroke="#c4c4c4" stroke-width="2" stroke-dasharray="2 2" opacity=".8"/><g font-family="Liberation Sans,Arial,sans-serif" font-size="16" font-weight="700" fill="#e2e2e2" text-anchor="middle" style="filter:blur(.5px)" letter-spacing="-.4"><text x="1635" y="1308">17</text><text x="1701" y="1308">19</text><text x="1767" y="1308">21</text><text x="1835" y="1308">23</text><text x="1901" y="1308">01</text><text x="1967" y="1308">03</text><text x="2033" y="1308">05</text><text x="2101" y="1308">07</text><text x="2167" y="1308">09</text><text x="2233" y="1308">11</text><text x="2301" y="1308">13</text><text x="2367" y="1308">15</text></g></svg>
<span class="t" style="left:1617.9px;top:1409.7px;font-size:33px;transform:scaleX(1.1617);-webkit-text-stroke:0.55px #2a2a2a;">Drop</span>
<span class="t" style="left:1706.1px;top:1418.0px;font-size:24px;color:#a6a6a6;transform:scaleX(1.2026);-webkit-text-stroke:0.4px #2a2a2a;">(pps)</span>
<span class="t" style="left:2356.6px;top:1414.5px;font-size:27px;font-weight:700;transform:scaleX(1.0662);-webkit-text-stroke:0.45px #2a2a2a;">0Pps</span>
<svg class="sv" style="left:1616px;top:1454px" width="820" height="90" viewBox="1616 1454 820 90"><path d="M1635 1500H2417" stroke="#7cb130" stroke-width="3.5"/><path d="M1636 1460V1510M1702 1460V1510M1768 1460V1510M1836 1460V1510M1902 1460V1510M1968 1460V1510M2034 1460V1510M2102 1460V1510M2168 1460V1510M2234 1460V1510M2302 1460V1510M2368 1460V1510" stroke="#c4c4c4" stroke-width="2" stroke-dasharray="2 2" opacity=".8"/><g font-family="Liberation Sans,Arial,sans-serif" font-size="16" font-weight="700" fill="#e2e2e2" text-anchor="middle" style="filter:blur(.5px)" letter-spacing="-.4"><text x="1635" y="1530">17</text><text x="1701" y="1530">19</text><text x="1767" y="1530">21</text><text x="1835" y="1530">23</text><text x="1901" y="1530">01</text><text x="1967" y="1530">03</text><text x="2033" y="1530">05</text><text x="2101" y="1530">07</text><text x="2167" y="1530">09</text><text x="2233" y="1530">11</text><text x="2301" y="1530">13</text><text x="2367" y="1530">15</text></g></svg>
<span class="t" style="left:1618.2px;top:1631.7px;font-size:33px;transform:scaleX(1.0659);-webkit-text-stroke:0.55px #2a2a2a;">Packets</span>
<span class="t" style="left:1750.7px;top:1640.0px;font-size:24px;color:#a6a6a6;transform:scaleX(1.1814);-webkit-text-stroke:0.4px #2a2a2a;">(pps)</span>
<span class="t" style="left:2336.8px;top:1636.5px;font-size:27px;font-weight:700;transform:scaleX(1.0170);-webkit-text-stroke:0.45px #2a2a2a;">2.9Pps</span>
<span class="t" style="left:2488.2px;top:743.7px;font-size:33px;transform:scaleX(1.1247);-webkit-text-stroke:0.55px #2a2a2a;">Utilization</span>
<span class="t" style="left:2657.6px;top:752.0px;font-size:24px;color:#a6a6a6;transform:scaleX(0.9848);-webkit-text-stroke:0.4px #2a2a2a;">(%)</span>
<span class="t" style="left:3200.3px;top:748.5px;font-size:27px;font-weight:700;transform:scaleX(0.9476);-webkit-text-stroke:0.45px #2a2a2a;">&lt; 0.01%</span>
<svg class="sv" style="left:2486px;top:788px" width="820" height="90" viewBox="2486 788 820 90"><path d="M2505 834H3287" stroke="#7cb130" stroke-width="3.5"/><path d="M2506 794V844M2572 794V844M2638 794V844M2706 794V844M2772 794V844M2838 794V844M2904 794V844M2972 794V844M3038 794V844M3104 794V844M3172 794V844M3238 794V844" stroke="#c4c4c4" stroke-width="2" stroke-dasharray="2 2" opacity=".8"/><g font-family="Liberation Sans,Arial,sans-serif" font-size="16" font-weight="700" fill="#e2e2e2" text-anchor="middle" style="filter:blur(.5px)" letter-spacing="-.4"><text x="2505" y="864">17</text><text x="2571" y="864">19</text><text x="2637" y="864">21</text><text x="2705" y="864">23</text><text x="2771" y="864">01</text><text x="2837" y="864">03</text><text x="2903" y="864">05</text><text x="2971" y="864">07</text><text x="3037" y="864">09</text><text x="3103" y="864">11</text><text x="3171" y="864">13</text><text x="3237" y="864">15</text></g></svg>
<span class="t" style="left:2488.2px;top:965.7px;font-size:33px;transform:scaleX(1.0597);-webkit-text-stroke:0.55px #2a2a2a;">Bytes</span>
<span class="t" style="left:2584.7px;top:974.0px;font-size:24px;color:#a6a6a6;transform:scaleX(1.1814);-webkit-text-stroke:0.4px #2a2a2a;">(bps)</span>
<span class="t" style="left:3190.1px;top:970.5px;font-size:27px;font-weight:700;transform:scaleX(0.9354);-webkit-text-stroke:0.45px #2a2a2a;">2.1 Kbps</span>
<svg class="sv" style="left:2486px;top:1010px" width="820" height="90" viewBox="2486 1010 820 90"><polygon points="2505,1056 2505.0,1018.2 2518.0,1018.7 2531.1,1018.6 2544.1,1018.6 2557.1,1018.4 2570.2,1018.9 2583.2,1019.0 2596.2,1018.4 2609.3,1018.7 2622.3,1017.9 2635.3,1018.7 2648.4,1018.6 2661.4,1019.1 2674.4,1018.9 2687.5,1018.2 2700.5,1018.3 2713.5,1018.7 2726.6,1017.8 2739.6,1018.4 2752.6,1018.0 2765.7,1018.0 2778.7,1017.9 2791.7,1018.8 2804.8,1018.0 2817.8,1018.1 2830.8,1018.3 2843.9,1018.9 2856.9,1017.9 2869.9,1018.4 2883.0,1018.5 2896.0,1018.9 2909.0,1018.9 2922.1,1018.9 2935.1,1018.2 2948.1,1018.3 2961.2,1018.3 2974.2,1018.9 2987.2,1019.0 3000.3,1018.0 3013.3,1018.0 3026.3,1018.1 3039.4,1018.1 3052.4,1018.4 3065.4,1018.6 3078.5,1018.1 3091.5,1017.8 3104.5,1018.3 3117.6,1018.3 3130.6,1018.5 3143.6,1019.0 3156.7,1018.7 3169.7,1018.5 3182.7,1018.6 3195.8,1018.7 3208.8,1017.9 3221.8,1019.0 3234.9,1018.8 3247.9,1018.1 3260.9,1017.2 3274.0,1015.9 3287.0,1015.1 3287,1056" fill="#4f642f"/><polyline points="2505.0,1018.2 2518.0,1018.7 2531.1,1018.6 2544.1,1018.6 2557.1,1018.4 2570.2,1018.9 2583.2,1019.0 2596.2,1018.4 2609.3,1018.7 2622.3,1017.9 2635.3,1018.7 2648.4,1018.6 2661.4,1019.1 2674.4,1018.9 2687.5,1018.2 2700.5,1018.3 2713.5,1018.7 2726.6,1017.8 2739.6,1018.4 2752.6,1018.0 2765.7,1018.0 2778.7,1017.9 2791.7,1018.8 2804.8,1018.0 2817.8,1018.1 2830.8,1018.3 2843.9,1018.9 2856.9,1017.9 2869.9,1018.4 2883.0,1018.5 2896.0,1018.9 2909.0,1018.9 2922.1,1018.9 2935.1,1018.2 2948.1,1018.3 2961.2,1018.3 2974.2,1018.9 2987.2,1019.0 3000.3,1018.0 3013.3,1018.0 3026.3,1018.1 3039.4,1018.1 3052.4,1018.4 3065.4,1018.6 3078.5,1018.1 3091.5,1017.8 3104.5,1018.3 3117.6,1018.3 3130.6,1018.5 3143.6,1019.0 3156.7,1018.7 3169.7,1018.5 3182.7,1018.6 3195.8,1018.7 3208.8,1017.9 3221.8,1019.0 3234.9,1018.8 3247.9,1018.1 3260.9,1017.2 3274.0,1015.9 3287.0,1015.1" fill="none" stroke="#79aa31" stroke-width="2.3"/><path d="M2505 1056H3287" stroke="#79aa31" stroke-width="2.8"/><path d="M2506 1017V1066M2572 1017V1066M2638 1017V1066M2706 1017V1066M2772 1017V1066M2838 1017V1066M2904 1017V1066M2972 1017V1066M3038 1017V1066M3104 1017V1066M3172 1017V1066M3238 1017V1066" stroke="#b9c79f" stroke-width="2" stroke-dasharray="2 2" opacity=".6"/><g font-family="Liberation Sans,Arial,sans-serif" font-size="16" font-weight="700" fill="#e2e2e2" text-anchor="middle" style="filter:blur(.5px)" letter-spacing="-.4"><text x="2505" y="1086">17</text><text x="2571" y="1086">19</text><text x="2637" y="1086">21</text><text x="2705" y="1086">23</text><text x="2771" y="1086">01</text><text x="2837" y="1086">03</text><text x="2903" y="1086">05</text><text x="2971" y="1086">07</text><text x="3037" y="1086">09</text><text x="3103" y="1086">11</text><text x="3171" y="1086">13</text><text x="3237" y="1086">15</text></g></svg>
<span class="t" style="left:2488.2px;top:1187.7px;font-size:33px;transform:scaleX(1.0609);-webkit-text-stroke:0.55px #2a2a2a;">Errors</span>
<span class="t" style="left:2589.8px;top:1196.0px;font-size:24px;color:#a6a6a6;transform:scaleX(1.2026);-webkit-text-stroke:0.4px #2a2a2a;">(pps)</span>
<span class="t" style="left:3226.6px;top:1192.5px;font-size:27px;font-weight:700;transform:scaleX(1.0662);-webkit-text-stroke:0.45px #2a2a2a;">0Pps</span>
<svg class="sv" style="left:2486px;top:1232px" width="820" height="90" viewBox="2486 1232 820 90"><path d="M2505 1278H3287" stroke="#7cb130" stroke-width="3.5"/><path d="M2506 1238V1288M2572 1238V1288M2638 1238V1288M2706 1238V1288M2772 1238V1288M2838 1238V1288M2904 1238V1288M2972 1238V1288M3038 1238V1288M3104 1238V1288M3172 1238V1288M3238 1238V1288" stroke="#c4c4c4" stroke-width="2" stroke-dasharray="2 2" opacity=".8"/><g font-family="Liberation Sans,Arial,sans-serif" font-size="16" font-weight="700" fill="#e2e2e2" text-anchor="middle" style="filter:blur(.5px)" letter-spacing="-.4"><text x="2505" y="1308">17</text><text x="2571" y="1308">19</text><text x="2637" y="1308">21</text><text x="2705" y="1308">23</text><text x="2771" y="1308">01</text><text x="2837" y="1308">03</text><text x="2903" y="1308">05</text><text x="2971" y="1308">07</text><text x="3037" y="1308">09</text><text x="3103" y="1308">11</text><text x="3171" y="1308">13</text><text x="3237" y="1308">15</text></g></svg>
<span class="t" style="left:2487.9px;top:1409.7px;font-size:33px;transform:scaleX(1.1617);-webkit-text-stroke:0.55px #2a2a2a;">Drop</span>
<span class="t" style="left:2576.1px;top:1418.0px;font-size:24px;color:#a6a6a6;transform:scaleX(1.2026);-webkit-text-stroke:0.4px #2a2a2a;">(pps)</span>
<span class="t" style="left:3226.6px;top:1414.5px;font-size:27px;font-weight:700;transform:scaleX(1.0662);-webkit-text-stroke:0.45px #2a2a2a;">0Pps</span>
<svg class="sv" style="left:2486px;top:1454px" width="820" height="90" viewBox="2486 1454 820 90"><path d="M2505 1500H3287" stroke="#7cb130" stroke-width="3.5"/><path d="M2506 1460V1510M2572 1460V1510M2638 1460V1510M2706 1460V1510M2772 1460V1510M2838 1460V1510M2904 1460V1510M2972 1460V1510M3038 1460V1510M3104 1460V1510M3172 1460V1510M3238 1460V1510" stroke="#c4c4c4" stroke-width="2" stroke-dasharray="2 2" opacity=".8"/><g font-family="Liberation Sans,Arial,sans-serif" font-size="16" font-weight="700" fill="#e2e2e2" text-anchor="middle" style="filter:blur(.5px)" letter-spacing="-.4"><text x="2505" y="1530">17</text><text x="2571" y="1530">19</text><text x="2637" y="1530">21</text><text x="2705" y="1530">23</text><text x="2771" y="1530">01</text><text x="2837" y="1530">03</text><text x="2903" y="1530">05</text><text x="2971" y="1530">07</text><text x="3037" y="1530">09</text><text x="3103" y="1530">11</text><text x="3171" y="1530">13</text><text x="3237" y="1530">15</text></g></svg>
<span class="t" style="left:2488.2px;top:1631.7px;font-size:33px;transform:scaleX(1.0659);-webkit-text-stroke:0.55px #2a2a2a;">Packets</span>
<span class="t" style="left:2620.7px;top:1640.0px;font-size:24px;color:#a6a6a6;transform:scaleX(1.1814);-webkit-text-stroke:0.4px #2a2a2a;">(pps)</span>
<span class="t" style="left:3214.2px;top:1636.5px;font-size:27px;font-weight:700;transform:scaleX(0.9318);-webkit-text-stroke:0.45px #2a2a2a;">3.1Pps</span>
<div class="b" style="left:3333px;top:730px;width:12px;height:491px;background:#1b1b1b;border-radius:6px;"></div>
<div class="b" style="left:3356px;top:630px;width:11.5px;height:1145px;background:#1b1b1b;border-radius:6px;"></div>
<div class="b" style="left:1619px;top:1674px;width:1730px;height:2px;background:#9c9c9c;"></div>
<div class="b" style="left:1618px;top:1688px;width:1733px;height:98px;overflow:hidden"><div class="b" style="left:1px;top:1px;width:1730px;height:100px;border:2px solid #a8a8a8;border-radius:16px"></div></div>
<span class="t" style="left:1639.9px;top:1710.2px;font-size:26px;transform:scaleX(1.0776);-webkit-text-stroke:0.55px #fff;">spine-1</span>
<svg class="sv" style="left:1744px;top:1712px" width="42" height="28" viewBox="1744 1712 42 28" fill="none" stroke="#fff" stroke-width="1.35" stroke-linecap="round" stroke-linejoin="round"><path d="M1775 1722.7H1748.4M1755.2 1716.9L1748.4 1722.7L1755.2 1728.5"/><path d="M1760.4 1729.1H1780.2M1773.4 1723.2L1780.2 1729.1L1773.4 1735"/></svg>
<span class="t" style="left:1794.3px;top:1710.2px;font-size:26px;transform:scaleX(1.1636);-webkit-text-stroke:0.55px #fff;">Not Available</span>
<span class="t" style="left:1639.4px;top:1746.9px;font-size:20px;color:#f0f0f0;transform:scaleX(1.1355);">Interface:</span>
<span class="t" style="left:1747.3px;top:1741.9px;font-size:26px;transform:scaleX(1.2464);-webkit-text-stroke:0.55px #fff;">eth0</span>
<span class="t" style="left:1826.2px;top:1746.9px;font-size:20px;color:#f0f0f0;transform:scaleX(1.0030);">|</span>
<span class="t" style="left:1847.6px;top:1746.9px;font-size:20px;color:#f0f0f0;transform:scaleX(1.0923);">Peer Host:</span>
<span class="t" style="left:1963.8px;top:1741.9px;font-size:26px;transform:scaleX(1.1636);-webkit-text-stroke:0.55px #fff;">Not Available</span>
<span class="t" style="left:2155.4px;top:1746.9px;font-size:20px;color:#f0f0f0;transform:scaleX(1.0030);">|</span>
<span class="t" style="left:2175.7px;top:1746.9px;font-size:20px;color:#f0f0f0;transform:scaleX(1.1104);">Peer Interface:</span>
<span class="t" style="left:2334.1px;top:1741.9px;font-size:26px;transform:scaleX(1.1650);-webkit-text-stroke:0.55px #fff;">Not Available</span>
</section>
</main></body></html>
